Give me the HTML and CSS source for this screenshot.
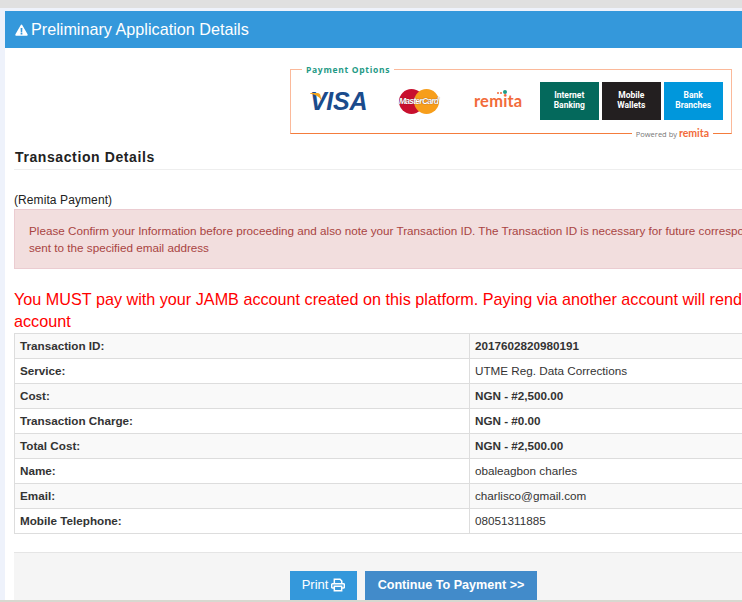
FILE: index.html
```html
<!DOCTYPE html>
<html lang="en">

<head>
  <meta charset="UTF-8" />
  <title>Preliminary Application Details</title>
  <link rel="stylesheet" href="styles.css">
</head>

<body>
  <div class="top-strip"></div>

  <div class="panel">
    <div class="panel-heading">
      <svg class="warn-icon" viewBox="0 0 24 22"><path fill="#fff" fill-rule="evenodd" d="M12 1c.7 0 1.2.4 1.6 1l9.6 17c.7 1.300-.2 2.800-1.600 2.800H2.400C1 21.800.1 20.300.8 19l9.600-17c.4-.6.900-1 1.600-1zM10.300 7.500l.4 7.500h2.600l.4-7.500zM10.400 16.300v3h3.200v-3z"/></svg>
      Preliminary Application Details
    </div>

    <div class="panel-body">
      <div class="pay-options">
        <span class="pay-legend">Payment Options</span>
        <div class="pay-row">
          <span class="visa">
            <svg class="visa-wing" viewBox="0 0 14 10"><path fill="#f4a51c" d="M0 0h8c2 0 3 1 3.500 3l1 5C10 4 6 1.500 0 .8z"/></svg>
            VISA
          </span>
          <span class="mastercard">
            <i class="mc-red"></i><i class="mc-orange"></i>
            <b>MasterCard</b>
          </span>
          <span class="remita">remita<i class="dots"></i></span>
          <div class="pay-tiles">
            <span class="tile tile-green">Internet<br>Banking</span>
            <span class="tile tile-black">Mobile<br>Wallets</span>
            <span class="tile tile-blue">Bank<br>Branches</span>
          </div>
        </div>
        <span class="pay-powered">Powered by <b>remita</b></span>
      </div>

      <h4 class="section-title">Transaction Details</h4>

      <div class="pay-type">(<b>Remita Payment</b>)</div>

      <div class="alert">
        Please Confirm your Information before proceeding and also note your Transaction ID. The Transaction ID is necessary for future correspondence and will be<br>
        sent to the specified email address
      </div>

      <p class="must-pay">
        You MUST pay with your JAMB account created on this platform. Paying via another account will render your payment invalid on that<br>
        account
      </p>

      <table class="details">
        <tr><th>Transaction ID:</th><td><b>2017602820980191</b></td></tr>
        <tr><th>Service:</th><td>UTME Reg. Data Corrections</td></tr>
        <tr><th>Cost:</th><td><b>NGN - #2,500.00</b></td></tr>
        <tr><th>Transaction Charge:</th><td><b>NGN - #0.00</b></td></tr>
        <tr><th>Total Cost:</th><td><b>NGN - #2,500.00</b></td></tr>
        <tr><th>Name:</th><td>obaleagbon charles</td></tr>
        <tr><th>Email:</th><td>charlisco@gmail.com</td></tr>
        <tr><th>Mobile Telephone:</th><td>08051311885</td></tr>
      </table>

      <div class="form-actions">
        <a class="btn btn-print">Print
          <svg class="print-icon" viewBox="0 0 16 16"><path fill="none" stroke="#fff" stroke-width="1.700" d="M3.800 6.500V1.500h6.500l2 2v3M3.800 11.500H1.800a1 1 0 0 1-1-1V7.500a1 1 0 0 1 1-1h12.400a1 1 0 0 1 1 1v3a1 1 0 0 1-1 1h-2M3.800 9.500h8.400v5H3.800z"/></svg>
        </a>
        <a class="btn btn-continue">Continue To Payment &gt;&gt;</a>
      </div>
    </div>
  </div>

  <div class="bottom-strip"></div>
</body>

</html>
```

FILE: styles.css
```css
html,
body {
  height: 602px;
  overflow: hidden;
}

body {
  margin: 0;
  background: #eef2fb;
  font-family: "Liberation Sans", Arial, sans-serif;
  font-size: 11.7px;
  color: #333;
}

.top-strip {
  height: 8px;
  background: #e0e0e0;
}

.bottom-strip {
  height: 2px;
  background: #d8d8d0;
}

.panel {
  width: 1100px;
  height: 589px;
  margin: 3px 0 0 5px;
  overflow: hidden;
  background: #fff;
}

.panel-heading {
  display: flex;
  align-items: center;
  gap: 3px;
  height: 37px;
  padding-left: 10px;
  background: #3498db;
  color: #fff;
  font-size: 16.200px;
}

.warn-icon {
  width: 13px;
  height: 12px;
}

.panel-body {
  padding: 21px 9px 0;
}

/* payment options banner */
.pay-options {
  position: relative;
  box-sizing: border-box;
  width: 442px;
  height: 65px;
  margin-left: 276px;
  border: 1px solid #fbb99a;
  border-bottom: 1px solid #f47c3c;
}

.pay-legend {
  position: absolute;
  top: -6px;
  left: 11px;
  padding: 0 4px;
  background: #fff;
  color: #1f9a85;
  font-family: "Open Sans", sans-serif;
  font-size: 8.500px;
  font-weight: bold;
  letter-spacing: 0.700px;
}

.pay-row {
  display: flex;
  align-items: center;
  height: 38px;
  margin-top: 12px;
}

.visa {
  position: relative;
  width: 58px;
  margin-left: 19px;
  color: #1a4b8c;
  font-size: 25px;
  font-weight: bold;
  font-style: italic;
  letter-spacing: -0.300px;
  line-height: 1;
}

.visa-wing {
  position: absolute;
  top: 4px;
  left: 0;
  width: 13px;
  height: 9px;
}

.mastercard {
  position: relative;
  width: 40px;
  height: 25px;
  margin-left: 31px;
}

.mc-red,
.mc-orange {
  position: absolute;
  top: 0;
  width: 25px;
  height: 25px;
  border-radius: 50%;
}

.mc-red {
  left: 0;
  background: #c8102e;
}

.mc-orange {
  right: 0;
  background: #f79e1b;
}

.mastercard b {
  position: absolute;
  top: 7px;
  left: 0;
  color: #fff;
  font-size: 8.500px;
  font-style: italic;
  letter-spacing: -0.750px;
  text-shadow: 0 0 1px #5a2a2a;
}

.remita {
  position: relative;
  width: 50px;
  margin-left: 35px;
  color: #f26b3a;
  font-family: Lato, sans-serif;
  font-size: 16.500px;
  font-weight: bold;
  letter-spacing: 0.200px;
}

.dots {
  position: absolute;
  top: 1px;
  left: 23px;
  width: 2px;
  height: 2px;
  border-radius: 50%;
  background: #f26b3a;
  box-shadow: 3px 0 #f26b3a, 7px -1px 0 1px #1f9a85;
}

.pay-tiles {
  display: flex;
  gap: 3.500px;
  margin-left: 16px;
}

.tile {
  display: flex;
  align-items: center;
  justify-content: center;
  width: 58.500px;
  height: 38px;
  color: #fff;
  font-family: Roboto, sans-serif;
  font-size: 8.500px;
  font-weight: bold;
  line-height: 1.150;
  text-align: center;
}

.tile-green {
  background: #04695c;
}

.tile-black {
  background: #231f20;
}

.tile-blue {
  background: #0097dc;
}

.pay-powered {
  position: absolute;
  right: 18px;
  bottom: -6px;
  padding: 0 4px;
  background: #fff;
  color: #777;
  font-family: "Open Sans", sans-serif;
  font-size: 7.500px;
}

.pay-powered b {
  color: #f26b3a;
  font-family: Lato, sans-serif;
  font-size: 10.500px;
  font-weight: bold;
}

.section-title {
  margin: 15px 0 0;
  padding: 0 0 4px 1px;
  border-bottom: 1px solid #eee;
  color: #222;
  font-size: 14px;
  letter-spacing: 0.600px;
}

.pay-type {
  margin-top: 23px;
  color: #222;
  font-size: 12px;
}

.pay-type b {
  font-weight: normal;
  letter-spacing: 0.100px;
}

.alert {
  box-sizing: border-box;
  height: 60px;
  margin-top: 2px;
  padding: 12px 14px;
  border: 1px solid #ebccd1;
  background: #f2dede;
  color: #a94442;
  line-height: 17px;
}

.must-pay {
  margin: 19px 0 0;
  color: #f00;
  font-size: 16.200px;
  line-height: 22px;
}

.details {
  width: 100%;
  margin-top: 1px;
  border-collapse: collapse;
  table-layout: fixed;
  color: #333;
}

.details th,
.details td {
  box-sizing: border-box;
  height: 25px;
  padding: 0 5px 2px;
  border: 1px solid #ddd;
  text-align: left;
}

.details th {
  width: 455px;
}

.details tr:nth-child(odd) {
  background: #f9f9f9;
}

.form-actions {
  display: flex;
  gap: 8px;
  height: 60px;
  margin-top: 18px;
  padding: 18px 0 0 276px;
  border-top: 1px solid #e5e5e5;
  background: #f5f5f5;
}

.btn {
  display: flex;
  align-items: center;
  justify-content: center;
  gap: 3px;
  box-sizing: border-box;
  height: 29px;
  padding-bottom: 2px;
  color: #fff;
  font-size: 13px;
}

.btn-print {
  width: 67px;
  background: #3498db;
}

.print-icon {
  width: 14px;
  height: 14px;
}

.btn-continue {
  width: 172px;
  background: #428bca;
  font-size: 12.600px;
  font-weight: bold;
}
```
